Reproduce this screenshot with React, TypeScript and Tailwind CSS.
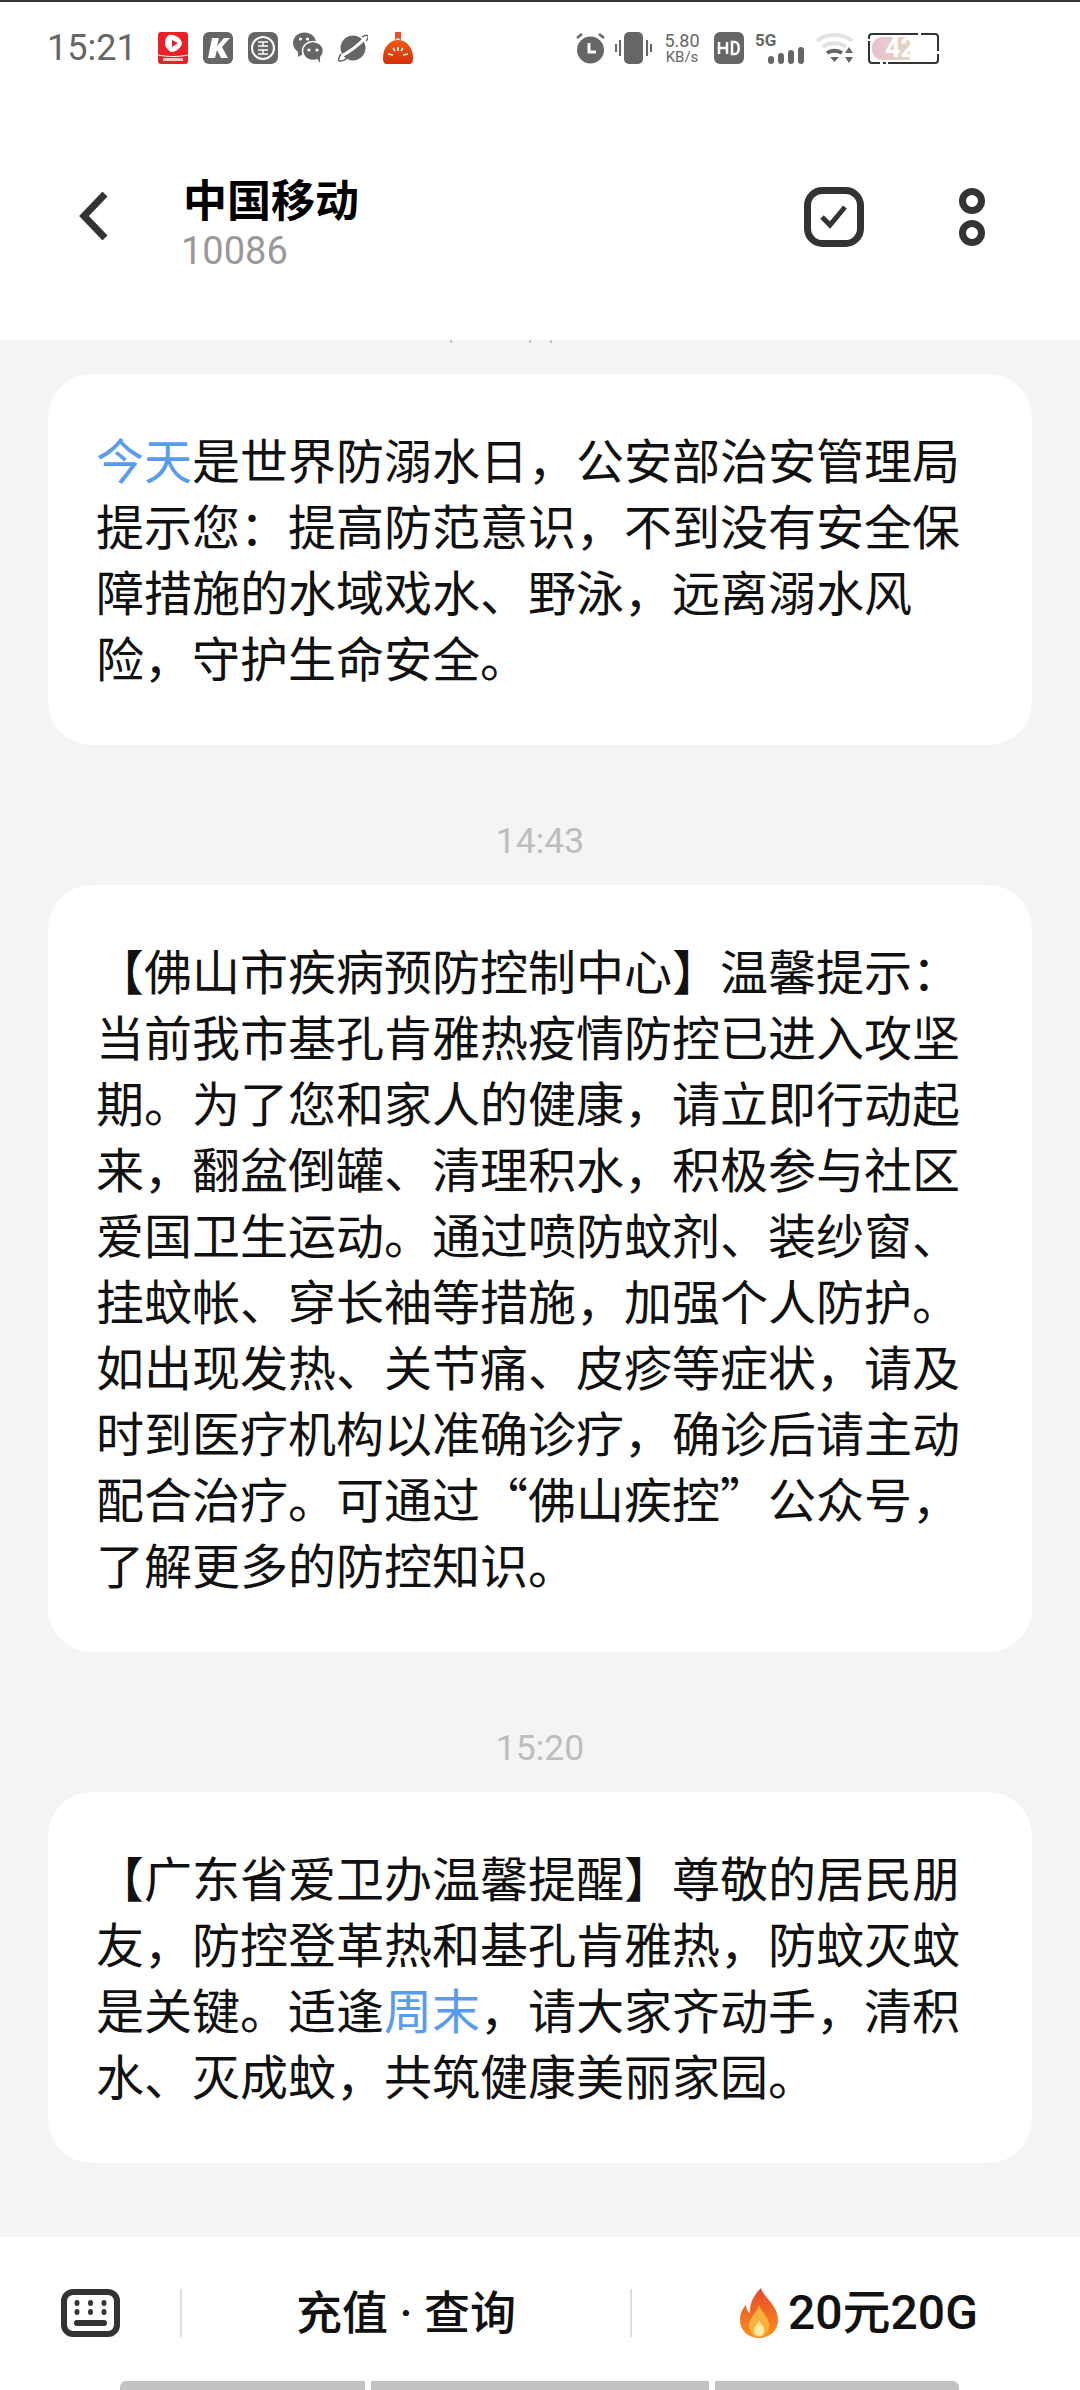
const body = "font-['Noto_Sans_CJK_SC',sans-serif]";
const latin = "font-['Roboto','Noto_Sans_CJK_SC',sans-serif]";

function Bubble({ children }: { children: React.ReactNode }) {
  return (
    <div className={`bg-white rounded-[44px] pl-[48px] pr-[50px] pt-[51px] pb-[56px] text-[48px] leading-[66px] text-[#111] ${body}`}>
      {children}
    </div>
  );
}

function Time({ children }: { children: React.ReactNode }) {
  return <div className="text-center text-[#bdbdbd] text-[35.5px] leading-[40px] mt-[76px] mb-[24px]">{children}</div>;
}

function StatusIcons() {
  return (
    <div className="flex items-center gap-[15px]">
      <svg width="30" height="32" viewBox="0 0 30 32">
        <rect width="30" height="32" rx="3" fill="#ea1f27" />
        <path d="M11 3c6-1 12 3 13 8 0 4-7 10-11 9-3-2-7-6-6-10 0-3 2-6 4-7z" fill="#fff" />
        <path d="M14 8l6 3-6 4z" fill="#ea1f27" />
        <path d="M0 23c10 2 20 2 30 0" stroke="#fff" strokeWidth="1" fill="none" />
        <rect x="5" y="26" width="20" height="3" fill="#fff" opacity=".75" />
      </svg>
      <svg width="30" height="32" viewBox="0 0 30 32">
        <rect width="30" height="32" rx="6" fill="#666" />
        <path d="M9 6h7l-2 8 7-8h6l-8 9 6 11h-7l-4-8-2 8H5z" fill="#fff" />
      </svg>
      <svg width="30" height="32" viewBox="0 0 30 32">
        <rect width="30" height="32" rx="7" fill="#666" />
        <circle cx="15" cy="16" r="11" fill="none" stroke="#fff" strokeWidth="2" />
        <path d="M10 10h10M15 10v4M10 14h10M10 18h10M15 18v4M10 22h10" stroke="#fff" strokeWidth="1.500" fill="none" />
      </svg>
      <svg width="30" height="32" viewBox="0 0 30 32">
        <ellipse cx="11.500" cy="11" rx="11.500" ry="10.500" fill="#666" />
        <path d="M5 18v7l7-4z" fill="#666" />
        <ellipse cx="20" cy="19" rx="10.500" ry="9.500" fill="#666" stroke="#fff" strokeWidth="1.500" />
        <path d="M24 26l3 5 0-7z" fill="#666" />
        <circle cx="16" cy="18" r="1.600" fill="#fff" />
        <circle cx="24" cy="18" r="1.600" fill="#fff" />
        <circle cx="7.500" cy="7" r="1.600" fill="#fff" />
        <circle cx="14.500" cy="7" r="1.600" fill="#fff" />
      </svg>
      <svg width="30" height="32" viewBox="0 0 30 32">
        <circle cx="15" cy="16" r="12.500" fill="#666" />
        <path d="M3 24C10 21 21 13 27 6" stroke="#fff" strokeWidth="3" fill="none" />
        <path d="M3 22c-3 4-3 7-1 7s5-1 7-3M24 5c3-2 5-2 6-1s-1 4-2 5" stroke="#666" strokeWidth="1.500" fill="none" />
      </svg>
      <svg width="30" height="32" viewBox="0 0 30 32">
        <defs>
          <linearGradient id="dome" x1="0" y1="0" x2="0" y2="1">
            <stop offset="0" stopColor="#ee5a18" />
            <stop offset="1" stopColor="#d42f06" />
          </linearGradient>
        </defs>
        <path d="M12 0h6v8l-3-2-3 2z" fill="#e8502a" />
        <path d="M4 32c-3 0-4-2-4-6C0 15 7 8 15 8s15 7 15 18c0 4-1 6-4 6z" fill="url(#dome)" />
        <path d="M5 22l5 1M25 22l-5 1M15 15v4M10 16l2 3M20 16l-2 3" stroke="#fff" strokeWidth="1.500" />
      </svg>
    </div>
  );
}

function StatusRight() {
  return (
    <div className="flex items-center">
      <svg width="29" height="32" viewBox="0 0 29 32">
        <circle cx="14.500" cy="18" r="13.500" fill="#666" />
        <path d="M13 11v9h7" stroke="#fff" strokeWidth="3" fill="none" />
        <path d="M1 6l5-4M28 6l-5-4" stroke="#666" strokeWidth="2.500" />
      </svg>
      <svg width="37" height="32" viewBox="0 0 37 32" className="ml-[10px]">
        <rect x="9" y="0" width="19" height="32" rx="5" fill="#666" />
        <path d="M5 8v16M32 8v16M1 12v8M36 12v8" stroke="#666" strokeWidth="2" />
      </svg>
      <div className="ml-[11px] w-[38px] flex flex-col items-center text-[#666]">
        <span className="text-[18px] leading-[18px]">5.80</span>
        <span className="text-[15px] leading-[14px]">KB/s</span>
      </div>
      <svg width="30" height="32" viewBox="0 0 30 32" className="ml-[13px]">
        <rect width="30" height="32" rx="6" fill="#666" />
        <path d="M5 10v12M13 10v12M5 16h8M18 10v12h3c5 0 5-12 0-12z" stroke="#fff" strokeWidth="2.500" fill="none" />
      </svg>
      <div className="ml-[11px] w-[49px] h-[31px] relative">
        <span className="absolute left-0 -top-[2px] text-[17px] leading-[18px] font-bold text-[#666]">5G</span>
        <svg width="36" height="17" viewBox="0 0 36 17" className="absolute right-0 bottom-0">
          <rect x="0" y="9" width="6" height="8" rx="3" fill="#666" />
          <rect x="10" y="6" width="6" height="11" rx="3" fill="#666" />
          <rect x="20" y="3" width="6" height="14" rx="3" fill="#666" />
          <rect x="30" y="0" width="6" height="17" rx="3" fill="#666" />
        </svg>
      </div>
      <svg width="38" height="30" viewBox="0 0 38 30" className="ml-[12px]">
        <path d="M1 8c9-8 26-8 35 0" stroke="#e2e2e2" strokeWidth="4" fill="none" />
        <path d="M7 14c6-5 17-5 23 0" stroke="#e2e2e2" strokeWidth="4" fill="none" />
        <path d="M11 20c4-3 11-3 15 0" stroke="#666" strokeWidth="4" fill="none" />
        <path d="M14 24h9l-4.500 5z" fill="#666" />
        <path d="M33 14l4 6h-8zM33 30l4-6h-8z" fill="#666" />
      </svg>
      <div className="ml-[14px] w-[71px] h-[31px] border-2 border-[#333] rounded-[4px] relative py-[2px] px-[2px]">
        <div className="w-[38px] h-full rounded-l-[10px] bg-linear-to-r from-[#e8c0d0] to-[#e6d6c4] text-white font-bold text-[27px] leading-[23px] overflow-hidden pl-[13px] whitespace-nowrap">
          42
        </div>
        <span className="absolute left-[48px] -top-[2px] w-[3px] h-[2px] bg-white" />
        <span className="absolute left-[10px] -bottom-[2px] w-[3px] h-[2px] bg-white" />
        <span className="absolute left-[16px] -bottom-[2px] w-[2px] h-[2px] bg-white" />
        <span className="absolute -left-[2px] top-[4px] w-[2px] h-[2px] bg-white" />
        <span className="absolute -right-[2px] top-[16px] w-[2px] h-[3px] bg-white" />
      </div>
    </div>
  );
}

export default function App() {
  return (
    <div className={`w-[1080px] h-[2390px] bg-[#f4f4f4] flex flex-col overflow-hidden ${latin}`}>
      <header className="bg-white h-[340px] shrink-0 border-t-2 border-[#333]">
        <div className="flex items-center justify-between pl-[47px] pr-[141px] h-[92px]">
          <div className="flex items-center gap-[21px]">
            <span className="text-[36px] text-[#666] leading-[40px]">15:21</span>
            <StatusIcons />
          </div>
          <StatusRight />
        </div>
        <div className="flex items-start mt-[78px] pl-[79px] pr-[95px]">
          <svg width="30" height="48" viewBox="0 0 30 48" className="mt-[20px]">
            <path d="M26 2L5 24l21 22" fill="none" stroke="#333" strokeWidth="7" />
          </svg>
          <div className="ml-[74px]">
            <div className={`text-[44px] leading-[53px] font-bold text-black ${body}`}>中国移动</div>
            <div className="text-[38px] leading-[52px] text-[#999] -ml-[2px]">10086</div>
          </div>
          <svg width="60" height="60" viewBox="0 0 60 60" className="ml-auto mt-[15px]">
            <rect x="3.500" y="3.500" width="53" height="53" rx="15" fill="none" stroke="#333" strokeWidth="7" />
            <path d="M18 30l8 8 15-18" fill="none" stroke="#333" strokeWidth="5" />
          </svg>
          <svg width="26" height="58" viewBox="0 0 26 58" className="ml-[95px] mt-[16px]">
            <circle cx="13" cy="13" r="9.500" fill="none" stroke="#333" strokeWidth="7" />
            <circle cx="13" cy="45" r="9.500" fill="none" stroke="#333" strokeWidth="7" />
          </svg>
        </div>
      </header>

      <main className="flex-1 px-[48px]">
        {/* bottom of a timestamp scrolled under the header */}
        <svg width="984" height="4" viewBox="0 0 984 4" className="block">
          <path d="M403 0v3M482 0v3M503 0v3" stroke="#c4c4c4" strokeWidth="2" />
        </svg>
        <div className="pt-[30px]">
          <Bubble>
            <span className="text-[#5a9cec]">今天</span>是世界防溺水日，公安部治安管理局提示您：提高防范意识，不到没有安全保障措施的水域戏水、野泳，远离溺水风险，守护生命安全。
          </Bubble>
          <Time>14:43</Time>
          <Bubble>
            【佛山市疾病预防控制中心】温馨提示：当前我市基孔肯雅热疫情防控已进入攻坚期。为了您和家人的健康，请立即行动起来，翻盆倒罐、清理积水，积极参与社区爱国卫生运动。通过喷防蚊剂、装纱窗、挂蚊帐、穿长袖等措施，加强个人防护。如出现发热、关节痛、皮疹等症状，请及时到医疗机构以准确诊疗，确诊后请主动配合治疗。可通过“佛山疾控”公众号，了解更多的防控知识。
          </Bubble>
          <Time>15:20</Time>
          <Bubble>
            【广东省爱卫办温馨提醒】尊敬的居民朋友，防控登革热和基孔肯雅热，防蚊灭蚊是关键。适逢<span className="text-[#5a9cec]">周末</span>，请大家齐动手，清积水、灭成蚊，共筑健康美丽家园。
          </Bubble>
        </div>
      </main>

      <footer className="bg-white h-[153px] shrink-0 flex flex-col">
        <div className="h-[144px] pt-[8px] flex items-center">
          <div className="w-[180px] pl-[61px]">
            <svg width="59" height="48" viewBox="0 0 59 48">
              <rect x="3" y="3" width="53" height="42" rx="9" fill="none" stroke="#333" strokeWidth="6" />
              <g fill="#333">
                <ellipse cx="16" cy="14" rx="2.500" ry="3" />
                <ellipse cx="29.500" cy="14" rx="2.500" ry="3" />
                <ellipse cx="43" cy="14" rx="2.500" ry="3" />
                <ellipse cx="16" cy="23" rx="2.500" ry="3" />
                <ellipse cx="29.500" cy="23" rx="2.500" ry="3" />
                <ellipse cx="43" cy="23" rx="2.500" ry="3" />
                <rect x="13" y="31" width="33" height="6" rx="3" />
              </g>
            </svg>
          </div>
          <div className="w-[452px] h-[48px] border-x-2 border-[#ddd] flex items-center justify-center text-[46px] font-medium text-[#111] whitespace-pre">
            充值 · 查询
          </div>
          <div className="flex items-center pl-[106px] gap-[8px] text-[48px] font-medium text-[#111]">
            <svg width="42" height="50" viewBox="0 0 42 50">
              <defs>
                <linearGradient id="flame" x1="0" y1="0" x2="0" y2="1">
                  <stop offset="0" stopColor="#e8452a" />
                  <stop offset="1" stopColor="#f9921e" />
                </linearGradient>
              </defs>
              <path d="M23 0c2 9 17 17 17 32 0 11-9 18-19 18S2 43 2 32c0-7 3-12 6-15 0 4 2 7 4 8C11 15 17 6 23 0z" fill="url(#flame)" />
              <path d="M21 17c2 7 10 12 10 20 0 7-5 12-10 12s-10-5-10-12c0-7 8-12 10-20z" fill="#fbb23c" />
              <path d="M21 32c1 4 5 5 5 10 0 4-2 6-5 6s-5-2-5-6c0-4 4-6 5-10z" fill="#fdeaa0" />
            </svg>
            <span>20元20G</span>
          </div>
        </div>
        <div className="flex gap-[6px] h-[9px] pl-[120px]">
          <div className="w-[245px] bg-[#c2c2c2] rounded-tl-[6px]" />
          <div className="w-[338px] bg-[#c2c2c2]" />
          <div className="w-[244px] bg-[#c2c2c2] rounded-tr-[6px]" />
        </div>
      </footer>
    </div>
  );
}
